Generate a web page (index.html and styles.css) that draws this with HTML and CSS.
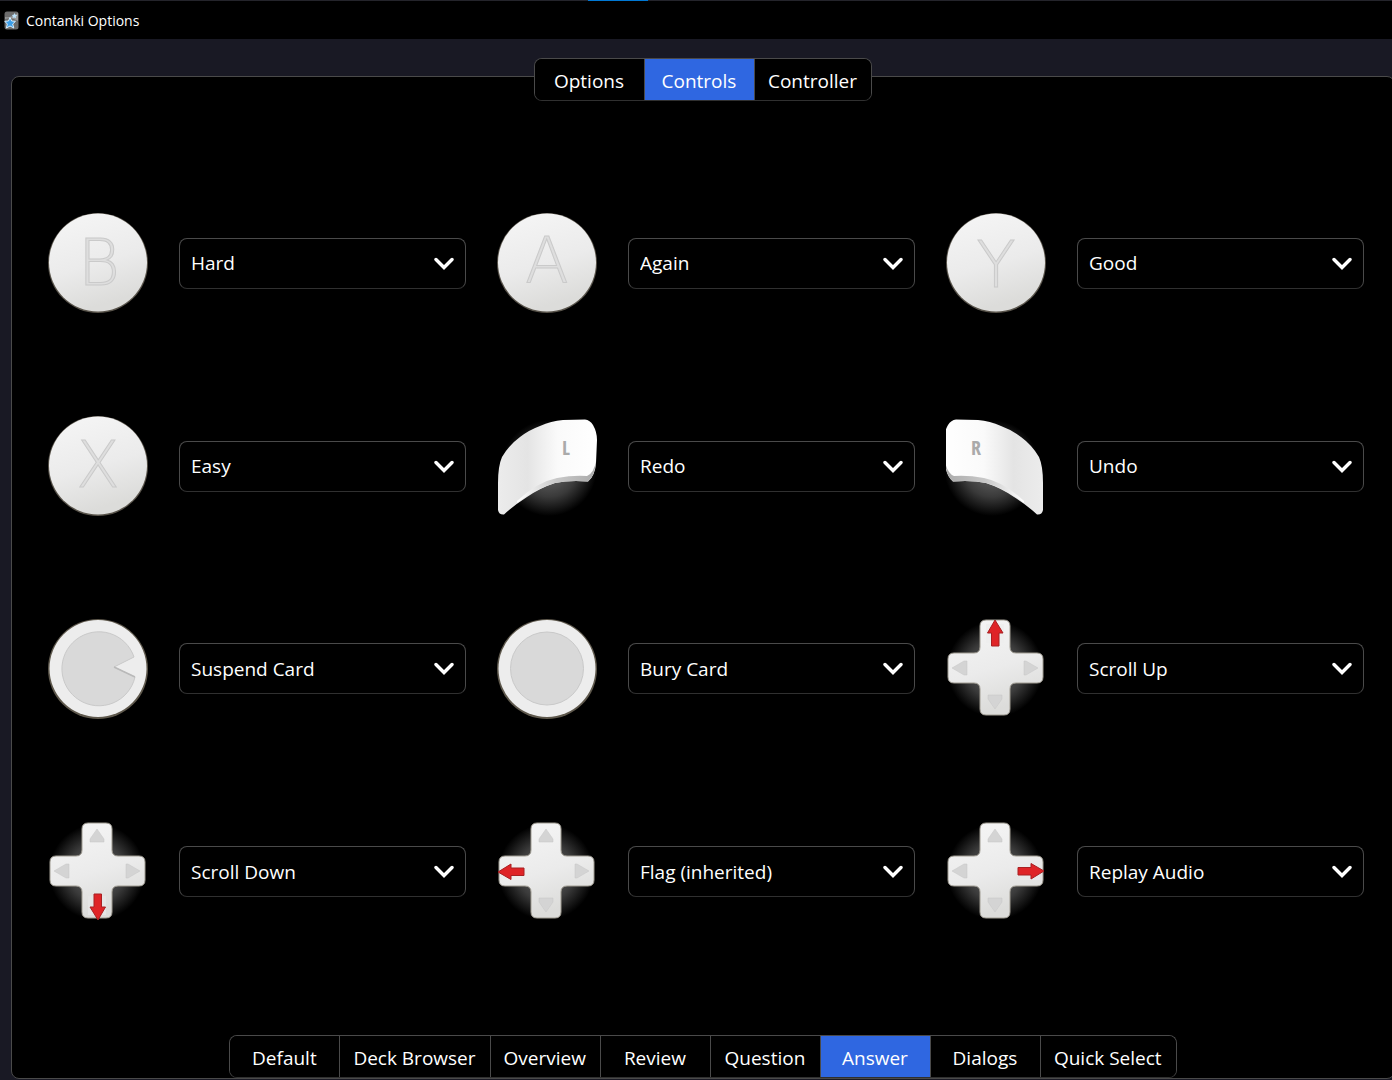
FILE: index.html
```html
<!DOCTYPE html>
<html lang="en">
<head>
<meta charset="utf-8">
<title>Contanki Options</title>
<link rel="stylesheet" href="styles.css">
</head>
<body>
<svg class="defs" aria-hidden="true">
  <defs>
    <linearGradient id="face" x1="0" y1="0" x2="0.3" y2="1">
      <stop offset="0" stop-color="#f6f6f6"/><stop offset="0.6" stop-color="#ebebeb"/><stop offset="1" stop-color="#dcdcda"/>
    </linearGradient>
    <radialGradient id="glow">
      <stop offset="0" stop-color="#707070"/><stop offset="0.6" stop-color="#3a3a3a"/><stop offset="1" stop-color="#000"/>
    </radialGradient>
    <linearGradient id="shoulder" x1="0" y1="0" x2="1" y2="0">
      <stop offset="0" stop-color="#ececec"/><stop offset="0.3" stop-color="#e4e4e4"/><stop offset="0.6" stop-color="#fafafa"/><stop offset="1" stop-color="#fff"/>
    </linearGradient>
    <linearGradient id="lip" x1="0" y1="0" x2="1" y2="0">
      <stop offset="0" stop-color="#fff"/><stop offset="0.5" stop-color="#c8c8c8"/><stop offset="1" stop-color="#aaa"/>
    </linearGradient>
    <symbol id="disc" viewBox="0 0 100 100">
      <circle cx="50" cy="50" r="50" fill="#59544b"/>
      <circle cx="50" cy="49.500" r="49" fill="url(#face)"/>
    </symbol>
    <symbol id="stick" viewBox="0 0 100 100">
      <circle cx="50" cy="50" r="50" fill="#5e584c"/>
      <circle cx="50" cy="49.500" r="48.500" fill="#ededed"/>
    </symbol>
    <symbol id="bumper" viewBox="0 0 100 100">
      <circle cx="52" cy="52" r="48" fill="url(#glow)"/>
      <path d="M1 94 L1 67 Q1 50 5 41 Q12 29 23 21 Q32 14 43 10 Q54 5 66 4 L88 3.500 Q93 4 96 9 Q100 16 100 24 L99 47 Q98 60 91 65.500 Q72 64 58 67 Q43 72 30 81 Q16 90 7 98.500 Q2 99 1 94Z" fill="url(#shoulder)"/>
      <path d="M20 85 Q40 66 60 62 Q76 59 90 60 Q97 57 99 45 Q98 60 91 65.500 Q72 64 58 67 Q40 72 20 87Z" fill="url(#lip)"/>
    </symbol>
    <symbol id="dpad" viewBox="0 0 100 100">
      <circle cx="49" cy="50" r="48" fill="url(#glow)"/>
      <path d="M40 1 H58 Q64 1 64 7 V28 Q64 34 70 34 H91 Q97 34 97 40 V58 Q97 64 91 64 H70 Q64 64 64 70 V90 Q64 96 58 96 H40 Q34 96 34 90 V70 Q34 64 28 64 H8 Q2 64 2 58 V40 Q2 34 8 34 H28 Q34 34 34 28 V7 Q34 1 40 1Z" fill="url(#face)" stroke="#a09c92" stroke-width="1"/>
      <g fill="#d4d4d4" stroke="#c6c6c6" stroke-width="0.500">
        <path d="M49 7 L56 17 V20 H42 V17Z"/><path d="M49 90 L42 80 V76 H56 V80Z"/>
        <path d="M6 49 L18 42 H21 V56 H18Z"/><path d="M92 49 L80 42 H78 V56 H80Z"/>
      </g>
    </symbol>
    <symbol id="arrow" viewBox="0 0 100 100">
      <path d="M49 1 L57 14 H53 V27 H45.500 V14 H41.500Z" fill="#df2427" stroke="#a82022" stroke-width="1"/>
    </symbol>
    <symbol id="chevron" viewBox="0 0 20 14"><path d="M2 2.500 L10 10.500 L18 2.500" fill="none" stroke="#fff" stroke-width="3.400" stroke-linecap="round"/></symbol>
  </defs>
</svg>

<header class="titlebar">
  <span class="progress"></span>
  <svg class="app-icon" viewBox="0 0 15 19" aria-hidden="true">
    <rect width="14" height="18" x="0.500" y="0.500" rx="2.500" fill="#6d6d6d"/>
    <path d="M1 6 Q7 7 14 2 V10 Q8 6 1 8Z" fill="#999"/>
    <path d="M6 6.500 L7.700 10 L11.500 10.300 L8.700 13 L9.800 17 L6 15 L2.400 17 L3.300 13 L0.800 10.300 L4.500 10Z" fill="#3c9ee8" stroke="#d8efff" stroke-width="1"/>
    <path d="M10.500 2 L11.400 3.700 L13.200 4.200 L11.800 5.500 L11.900 7.300 L10.300 6.500 L8.600 7.100 L8.900 5.300 L7.800 3.900 L9.600 3.700Z" fill="#bce2fa"/>
  </svg>
  <h1 class="title">Contanki Options</h1>
</header>

<main class="panel">
  <nav class="tabs tabs-top" aria-label="Sections">
    <button type="button" class="tab">Options</button>
    <button type="button" class="tab active">Controls</button>
    <button type="button" class="tab">Controller</button>
  </nav>

  <div class="controls">
    <div class="control">
      <svg class="pad" viewBox="0 0 100 100" aria-hidden="true"><use href="#disc"/><text class="engraved" x="51" y="72">B</text></svg>
      <span class="picker"><select class="select" aria-label="B button"><option>Hard</option></select><svg class="chevron"><use href="#chevron"/></svg></span>
    </div>
    <div class="control">
      <svg class="pad" viewBox="0 0 100 100" aria-hidden="true"><use href="#disc"/><text class="engraved" x="50" y="70">A</text></svg>
      <span class="picker"><select class="select" aria-label="A button"><option>Again</option></select><svg class="chevron"><use href="#chevron"/></svg></span>
    </div>
    <div class="control">
      <svg class="pad" viewBox="0 0 100 100" aria-hidden="true"><use href="#disc"/><text class="engraved" x="50" y="74">Y</text></svg>
      <span class="picker"><select class="select" aria-label="Y button"><option>Good</option></select><svg class="chevron"><use href="#chevron"/></svg></span>
    </div>
    <div class="control">
      <svg class="pad" viewBox="0 0 100 100" aria-hidden="true"><use href="#disc"/><text class="engraved" x="50" y="71">X</text></svg>
      <span class="picker"><select class="select" aria-label="X button"><option>Easy</option></select><svg class="chevron"><use href="#chevron"/></svg></span>
    </div>
    <div class="control">
      <svg class="pad" viewBox="0 0 100 100" aria-hidden="true"><use href="#bumper"/><text class="engraved small" x="69" y="39">L</text></svg>
      <span class="picker"><select class="select" aria-label="Left shoulder"><option>Redo</option></select><svg class="chevron"><use href="#chevron"/></svg></span>
    </div>
    <div class="control">
      <svg class="pad" viewBox="0 0 100 100" aria-hidden="true"><g transform="matrix(-1 0 0 1 98 0)"><use href="#bumper"/></g><text class="engraved small" x="30" y="39">R</text></svg>
      <span class="picker"><select class="select" aria-label="Right shoulder"><option>Undo</option></select><svg class="chevron"><use href="#chevron"/></svg></span>
    </div>
    <div class="control">
      <svg class="pad" viewBox="0 0 100 100" aria-hidden="true"><use href="#stick"/><path d="M86 38 L66 48 L87 58 A37 37 0 1 1 86 38Z" fill="#d9d9d9" stroke="#c9c9c9"/><path d="M66 48 L87 58" stroke="#b9b9b9" stroke-width="1.500"/></svg>
      <span class="picker"><select class="select" aria-label="C stick"><option>Suspend Card</option></select><svg class="chevron"><use href="#chevron"/></svg></span>
    </div>
    <div class="control">
      <svg class="pad" viewBox="0 0 100 100" aria-hidden="true"><use href="#stick"/><circle cx="50" cy="49.500" r="36.500" fill="#d9d9d9" stroke="#c9c9c9"/></svg>
      <span class="picker"><select class="select" aria-label="Left stick"><option>Bury Card</option></select><svg class="chevron"><use href="#chevron"/></svg></span>
    </div>
    <div class="control">
      <svg class="pad" viewBox="0 0 100 100" aria-hidden="true"><use href="#dpad"/><path d="M40 5 H58 V24 H40Z" fill="#eee"/><use href="#arrow"/></svg>
      <span class="picker"><select class="select" aria-label="D-pad up"><option>Scroll Up</option></select><svg class="chevron"><use href="#chevron"/></svg></span>
    </div>
    <div class="control">
      <svg class="pad" viewBox="0 0 100 100" aria-hidden="true"><use href="#dpad"/><path d="M40 74 H58 V93 H40Z" fill="#e5e5e5"/><g transform="rotate(180 49.500 49.500)"><use href="#arrow"/></g></svg>
      <span class="picker"><select class="select" aria-label="D-pad down"><option>Scroll Down</option></select><svg class="chevron"><use href="#chevron"/></svg></span>
    </div>
    <div class="control">
      <svg class="pad" viewBox="0 0 100 100" aria-hidden="true"><use href="#dpad"/><path d="M5 40 H24 V58 H5Z" fill="#eee"/><g transform="rotate(-90 49.500 49.500)"><use href="#arrow"/></g></svg>
      <span class="picker"><select class="select" aria-label="D-pad left"><option>Flag (inherited)</option></select><svg class="chevron"><use href="#chevron"/></svg></span>
    </div>
    <div class="control">
      <svg class="pad" viewBox="0 0 100 100" aria-hidden="true"><use href="#dpad"/><path d="M74 40 H94 V58 H74Z" fill="#eaeaea"/><g transform="rotate(90 49.500 49.500)"><use href="#arrow"/></g></svg>
      <span class="picker"><select class="select" aria-label="D-pad right"><option>Replay Audio</option></select><svg class="chevron"><use href="#chevron"/></svg></span>
    </div>
  </div>

  <nav class="tabs" aria-label="States">
    <button type="button" class="tab">Default</button>
    <button type="button" class="tab">Deck Browser</button>
    <button type="button" class="tab">Overview</button>
    <button type="button" class="tab">Review</button>
    <button type="button" class="tab">Question</button>
    <button type="button" class="tab active">Answer</button>
    <button type="button" class="tab">Dialogs</button>
    <button type="button" class="tab">Quick Select</button>
  </nav>
</main>
</body>
</html>
```
FILE: styles.css
```css
* {
  box-sizing: border-box;
}

body {
  display: flex;
  flex-direction: column;
  min-height: 100vh;
  margin: 0;
  overflow-x: hidden;
  background: #191924;
  color: #fff;
  font-family: "Open Sans", "Noto Sans", sans-serif;
  font-size: 19px;
}

.defs {
  position: absolute;
  width: 0;
  height: 0;
}

.titlebar {
  position: relative;
  display: flex;
  align-items: center;
  gap: 7px;
  height: 39px;
  padding: 1px 4px 0;
  border-top: 1px solid #24242b;
  background: #000;
}

.progress {
  position: absolute;
  top: -1px;
  left: 588px;
  width: 60px;
  height: 1px;
  background: #0078d4;
}

.app-icon {
  width: 15px;
  height: 19px;
}

.title {
  margin: 0;
  font-size: 14px;
  font-weight: 400;
  line-height: 20px;
}

.panel {
  display: flex;
  flex: 1;
  flex-direction: column;
  margin: 37px -3px 1px 11px;
  border: 1px solid #4a4a4a;
  border-radius: 8px;
  background: #000;
}

.tabs {
  display: flex;
  align-self: center;
  border: 1px solid #4a4a4a;
  border-bottom-color: #303030;
  border-radius: 8px;
  background: #000;
  overflow: hidden;
}

.tabs-top {
  margin-top: -19px;
}

.tab {
  min-width: 110px;
  height: 41px;
  padding: 2px 14px 0 13px;
  border: 0;
  border-left: 1px solid #4a4a4a;
  background: #000;
  color: inherit;
  font: inherit;
}

.tab:first-child {
  min-width: 109px;
  border-left: 0;
}

.tab.active {
  background: #2f67e1;
}

.controls {
  display: grid;
  flex: 1;
  grid-template-columns: repeat(3, 1fr);
  grid-auto-rows: 1fr;
  gap: 0 31px;
  padding: 61px 30px 62px 36px;
}

.control {
  display: flex;
  align-items: center;
  gap: 31px;
}

.pad {
  flex: none;
  width: 100px;
  height: 100px;
}

.engraved {
  fill: #dedede;
  stroke: #cacaca;
  stroke-width: 1px;
  font-family: "DejaVu Sans", sans-serif;
  font-size: 64px;
  font-weight: 200;
  text-anchor: middle;
}

.engraved.small {
  fill: #aaa;
  stroke: none;
  font-family: "Open Sans Condensed", "DejaVu Sans Condensed", sans-serif;
  font-size: 20px;
}

.picker {
  position: relative;
  flex: 1;
}

.select {
  display: block;
  width: 100%;
  height: 51px;
  padding: 0 44px 0 11px;
  border: 1px solid #4a4a4a;
  border-bottom-color: #303030;
  border-radius: 8px;
  appearance: none;
  background: #000;
  color: inherit;
  font: inherit;
}

.chevron {
  position: absolute;
  top: 19px;
  right: 12px;
  width: 20px;
  height: 14px;
  pointer-events: none;
}
```
